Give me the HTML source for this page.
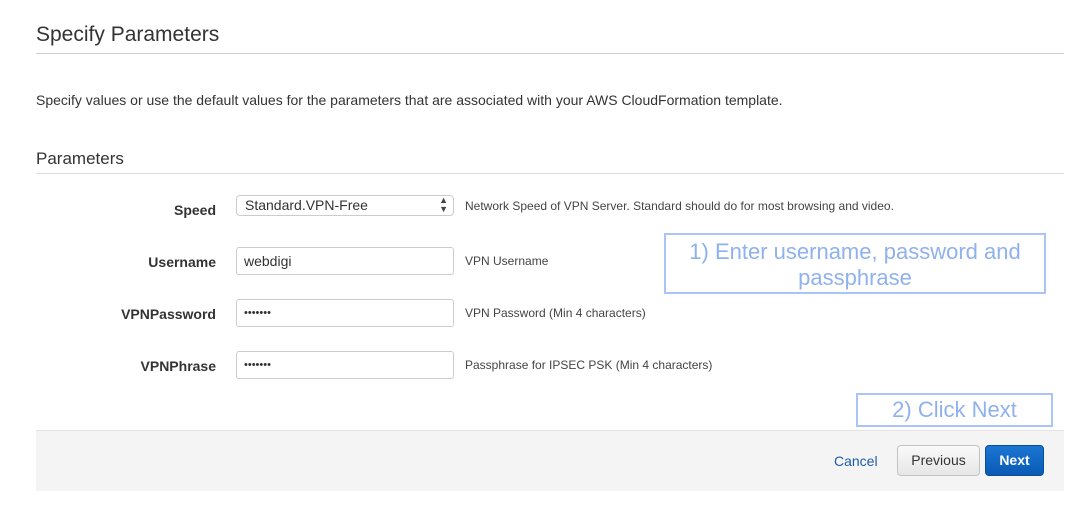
<!DOCTYPE html>
<html><head><style>
body{margin:0;width:1074px;height:515px;background:#fff;font-family:"Liberation Sans",Arial,sans-serif;color:#333;position:relative;overflow:hidden}
.a{position:absolute}
.lbl{position:absolute;right:858px;font-size:14px;font-weight:bold;color:#333}
.inp{position:absolute;left:236px;width:218px;height:28px;border:1px solid #ccc;border-radius:3px;box-sizing:border-box;font-size:14px;padding:5px 7px;color:#333}
.hint{position:absolute;left:465px;font-size:12px;color:#444}
.ann{position:absolute;border:2px solid #a9c4f5;color:#8fb1ee;font-size:22px;text-align:center;box-sizing:border-box;line-height:26px}
</style></head><body>
<div class="a" style="left:36px;top:23px;font-size:21px;color:#333">Specify Parameters</div>
<div class="a" style="left:36px;top:53px;width:1028px;height:1px;background:#ccc"></div>
<div class="a" style="left:36px;top:92px;font-size:14px">Specify values or use the default values for the parameters that are associated with your AWS CloudFormation template.</div>
<div class="a" style="left:36px;top:149px;font-size:17px">Parameters</div>
<div class="a" style="left:36px;top:173px;width:1028px;height:1px;background:#ddd"></div>

<div class="lbl" style="top:202px">Speed</div>
<div class="inp" style="top:195px;height:21px;border-radius:4px;padding:1px 8px;background:#fff">Standard.VPN-Free<span style="position:absolute;right:5px;top:0;font-size:9px;line-height:9px;color:#444">▲<br>▼</span></div>
<div class="hint" style="top:199px">Network Speed of VPN Server. Standard should do for most browsing and video.</div>

<div class="lbl" style="top:254px">Username</div>
<div class="inp" style="top:247px">webdigi</div>
<div class="hint" style="top:254px">VPN Username</div>

<div class="lbl" style="top:306px">VPNPassword</div>
<div class="inp" style="top:299px;font-size:11px;padding-top:7px">•••••••</div>
<div class="hint" style="top:306px">VPN Password (Min 4 characters)</div>

<div class="lbl" style="top:358px">VPNPhrase</div>
<div class="inp" style="top:351px;font-size:11px;padding-top:7px">•••••••</div>
<div class="hint" style="top:358px">Passphrase for IPSEC PSK (Min 4 characters)</div>

<div class="ann" style="left:664px;top:233px;width:382px;height:61px;padding-top:4px">1) Enter username, password and<br>passphrase</div>
<div class="ann" style="left:856px;top:393px;width:197px;height:34px;line-height:30px">2) Click Next</div>

<div class="a" style="left:36px;top:430px;width:1028px;height:60px;background:#f4f4f4;border-top:1px solid #e3e3e3"></div>
<div class="a" style="left:834px;top:453px;font-size:14px;color:#1d5dab">Cancel</div>
<div class="a" style="left:897px;top:445px;width:83px;height:31px;box-sizing:border-box;border:1px solid #c3c3c3;border-radius:4px;background:linear-gradient(#fafafa,#e6e6e6);font-size:14px;text-align:center;line-height:29px;color:#333">Previous</div>
<div class="a" style="left:985px;top:445px;width:59px;height:31px;box-sizing:border-box;border:1px solid #0a4f9c;border-radius:4px;background:linear-gradient(#1a75d2,#0a5bb5);font-size:14px;font-weight:bold;text-align:center;line-height:29px;color:#fff">Next</div>
</body></html>
